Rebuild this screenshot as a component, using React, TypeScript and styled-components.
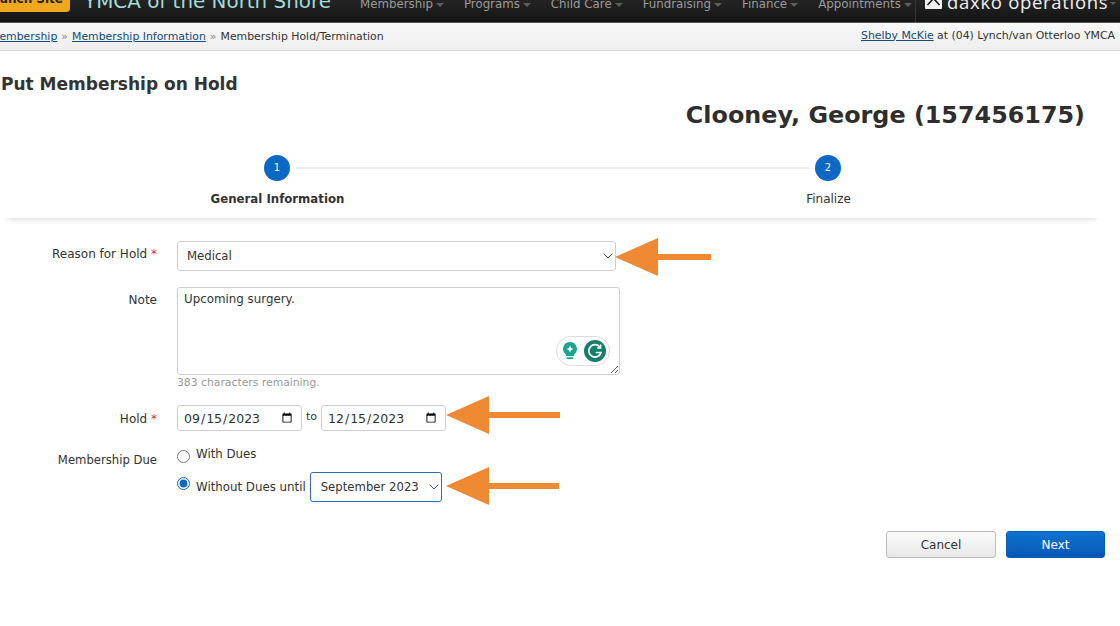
import React from 'react'
import styled, { createGlobalStyle } from 'styled-components'
import { ChevronDown } from 'lucide-react'

const GlobalStyle = createGlobalStyle`
  html, body {
    margin: 0;
    padding: 0;
    background: #fff;
  }
  body {
    width: 1120px;
    height: 626px;
    overflow: hidden;
    font-family: 'DejaVu Sans', Verdana, sans-serif;
    font-size: 12px;
    color: #333;
  }
`

const Page = styled.div`
  position: relative;
  width: 1120px;
  height: 626px;
  overflow: hidden;
`

const TopBar = styled.header`
  display: flex;
  align-items: flex-end;
  height: 22px;
  overflow: hidden;
  background: linear-gradient(#242424, #141414);
  border-bottom: 1px solid #555;
`

const LaunchBadge = styled.div`
  flex: none;
  width: 70px;
  height: 24px;
  margin-bottom: 10px;
  padding-right: 7px;
  box-sizing: border-box;
  border-radius: 0 0 4px 0;
  background: #f0a91f;
  color: #222;
  font-size: 12px;
  font-weight: bold;
  line-height: 22px;
  text-align: right;
  white-space: nowrap;
  overflow: hidden;
  direction: rtl;
`

const SiteName = styled.div`
  flex: none;
  width: 276px;
  margin-left: 14px;
  margin-bottom: 8px;
  color: #a2dcd8;
  font-size: 19.9px;
  line-height: 24px;
  white-space: nowrap;
`

const Nav = styled.nav`
  display: flex;
  flex: none;
  width: 555px;
  height: 22px;
  align-items: flex-end;
  gap: 20px;
  border-right: 1px solid #333;
`

const NavItem = styled.span`
  display: inline-flex;
  align-items: center;
  gap: 3px;
  margin-bottom: 10px;
  color: #9b9b9b;
  font-size: 11.8px;
  line-height: 16px;
  white-space: nowrap;

  &::after {
    content: '';
    margin-top: 2px;
    border-top: 4px solid #5e5e5e;
    border-left: 4px solid transparent;
    border-right: 4px solid transparent;
  }
`

const Logo = styled.div`
  display: flex;
  flex: none;
  align-items: flex-end;
  gap: 5px;
  margin-left: 9px;
  margin-bottom: 8px;
  color: #f0f0f0;
  font-family: 'Open Sans', sans-serif;
  font-size: 18.5px;
  line-height: 24px;
  letter-spacing: 0.7px;
  white-space: nowrap;

  svg {
    margin-bottom: 5px;
  }
`

const LogoCaret = styled.span`
  flex: none;
  margin-bottom: 9px;
  margin-left: -3px;
  border-top: 3px solid #5e5e5e;
  border-left: 3px solid transparent;
  border-right: 3px solid transparent;
`

const CrumbBar = styled.div`
  display: flex;
  align-items: center;
  justify-content: space-between;
  height: 27px;
  padding-right: 5px;
  overflow: hidden;
  background: linear-gradient(#f8f8f8, #eeeeee);
  border-bottom: 1px solid #d9d9d9;
  font-size: 10.9px;
`

const Crumbs = styled.div`
  margin-left: -10px;
  white-space: nowrap;
  line-height: 26px;
`

const CrumbLink = styled.a`
  color: #164a78;
  text-decoration: underline;
`

const CrumbSep = styled.span`
  margin: 0 4px;
  color: #888;
`

const UserInfo = styled.div`
  margin-bottom: 2px;
  white-space: nowrap;
  line-height: 24px;
`

const Title = styled.h1`
  margin: 21px 0 0 1px;
  color: #333;
  font-size: 17px;
  font-weight: bold;
  line-height: 24px;
`

const MemberName = styled.h2`
  margin: 3px 35px 0 0;
  color: #2e2e2e;
  font-size: 23.85px;
  font-weight: bold;
  line-height: 32px;
  text-align: right;
`

const Stepper = styled.section`
  width: 1103px;
  margin-top: 24px;
  padding-bottom: 9px;
  box-shadow: 0 7px 7px -7px rgba(0, 0, 0, 0.2);
`

const StepTrack = styled.div`
  display: flex;
  align-items: center;
  padding: 0 262px 0 264px;
`

const StepCircle = styled.div`
  flex: none;
  width: 26px;
  height: 26px;
  border-radius: 50%;
  background: #0b68c4;
  color: #fff;
  font-size: 10px;
  line-height: 26px;
  text-align: center;
`

const StepLine = styled.div`
  flex: 1;
  height: 2px;
  margin: 0 6px;
  background: #ececec;
`

const StepLabels = styled.div`
  display: grid;
  grid-template-columns: 551px 551px;
  margin-top: 8px;
  padding-left: 2px;
`

const StepLabel = styled.div<{ $active?: boolean }>`
  font-size: ${(p) => (p.$active ? '11.75px' : '12px')};
  font-weight: ${(p) => (p.$active ? 'bold' : 'normal')};
  line-height: 20px;
  text-align: center;
`

const Form = styled.form`
  display: grid;
  grid-template-columns: 157px 1fr;
  column-gap: 20px;
  margin-top: 23px;
`

const FieldLabel = styled.label<{ $top: number; $size?: number }>`
  padding-top: ${(p) => p.$top}px;
  font-size: ${(p) => p.$size ?? 12}px;
  line-height: 16px;
  text-align: right;
`

const Required = styled.span`
  color: #d9342b;
`

const Field = styled.div<{ $gap: number }>`
  margin-bottom: ${(p) => p.$gap}px;
`

const SelectWrap = styled.div<{ $width: number }>`
  position: relative;
  flex: none;
  width: ${(p) => p.$width}px;

  svg {
    position: absolute;
    top: 50%;
    right: 0;
    margin-top: -8px;
    color: #555;
    pointer-events: none;
  }
`

const Select = styled.select<{ $focus?: boolean; $height: number; $pad: number }>`
  display: block;
  width: 100%;
  height: ${(p) => p.$height}px;
  padding: 0 16px 0 ${(p) => p.$pad}px;
  box-sizing: border-box;
  appearance: none;
  border: 1px solid ${(p) => (p.$focus ? '#2a6db5' : '#cfcfcf')};
  border-radius: 3px;
  background: #fff;
  color: #333;
  font: inherit;
  font-size: 11.7px;
`

const NoteWrap = styled.div`
  position: relative;
  width: 443px;
`

const Note = styled.textarea`
  display: block;
  width: 443px;
  height: 88px;
  padding: 4px 6px;
  box-sizing: border-box;
  border: 1px solid #cfcfcf;
  border-radius: 3px;
  color: #333;
  font: inherit;
  font-size: 11.85px;
  line-height: 15px;
`

const GrammarlyPill = styled.div`
  position: absolute;
  top: 49px;
  right: 10px;
  display: flex;
  align-items: center;
  gap: 6px;
  width: 54px;
  height: 30px;
  padding-left: 5px;
  box-sizing: border-box;
  border: 1px solid #dcdcdc;
  border-radius: 15px;
  background: #fff;
`

const Hint = styled.div`
  margin-top: 1px;
  color: #999;
  font-size: 10.8px;
  line-height: 14px;
`

const DateRow = styled.div`
  display: flex;
  align-items: center;
  gap: 4px;
  color: #333;
`

const DateInput = styled.input`
  width: 125px;
  height: 26px;
  padding: 0 6px 0 5px;
  box-sizing: border-box;
  border: 1px solid #cfcfcf;
  border-radius: 3px;
  background: #fff;
  color: #333;
  font: inherit;
  font-size: 12.5px;
`

const ToText = styled.span`
  margin-top: -3px;
  font-size: 11px;
`

const RadioRow = styled.div<{ $gap: number }>`
  display: flex;
  align-items: center;
  height: 16px;
  margin-bottom: ${(p) => p.$gap}px;
`

const DueRow = styled.div`
  display: flex;
  align-items: center;
  height: 30px;
`

const Radio = styled.input<{ $lift: number }>`
  flex: none;
  width: 13px;
  height: 13px;
  margin: 0 6px ${(p) => p.$lift}px 0;
  accent-color: #0b68c4;
`

const RadioText = styled.span<{ $lift: number }>`
  margin-right: 4px;
  margin-bottom: ${(p) => p.$lift}px;
  font-size: 11.8px;
  white-space: nowrap;
`

const Buttons = styled.div`
  display: flex;
  justify-content: flex-end;
  gap: 10px;
  width: 1105px;
  margin-top: 29px;
`

const CancelButton = styled.button`
  width: 110px;
  height: 27px;
  border: 1px solid #bdbdbd;
  border-radius: 3px;
  background: linear-gradient(#fbfbfb, #e8e8e8);
  color: #333;
  font: inherit;
`

const NextButton = styled.button`
  width: 99px;
  height: 27px;
  border: 1px solid #0a5db3;
  border-radius: 3px;
  background: linear-gradient(#0d74d1, #0a56b4);
  color: #fff;
  font: inherit;
`

const Arrow = styled.svg<{ $x: number; $y: number }>`
  position: absolute;
  left: ${(p) => p.$x}px;
  top: ${(p) => p.$y}px;
`

const NAV_ITEMS = ['Membership', 'Programs', 'Child Care', 'Fundraising', 'Finance', 'Appointments']

const OrangeArrow = ({ x, y, length }: { x: number; y: number; length: number }) => (
  <Arrow $x={x} $y={y} width={length} height={38} viewBox={`0 0 ${length} 38`}>
    <path d={`M0 19 L43 0 V16 H${length} V22 H43 V38 Z`} fill="#ee8a34" />
  </Arrow>
)

const LogoMark = () => (
  <svg width="17" height="12" viewBox="0 0 17 12">
    <path d="M1 0 H16 Q17 0 17 1 V11 Q17 12 16 12 H1 Q0 12 0 11 V1 Q0 0 1 0 Z" fill="#f0f0f0" />
    <path d="M2.5 8 L8.5 1.5 L14.5 8" fill="none" stroke="#1a1a1a" strokeWidth="1.6" />
  </svg>
)

const BulbIcon = () => (
  <svg width="16" height="18" viewBox="0 0 16 18">
    <path d="M8 0a7 7 0 0 1 4 12.7V14H4v-1.3A7 7 0 0 1 8 0Z" fill="#1aa58f" />
    <path d="M8 3.5 9.2 6 11.5 7 9.2 8 8 10.5 6.8 8 4.5 7 6.8 6Z" fill="#fff" />
    <rect x="4.5" y="15.2" width="7" height="1.8" rx="0.9" fill="#1aa58f" />
  </svg>
)

const GrammarlyIcon = () => (
  <svg width="22" height="22" viewBox="0 0 22 22">
    <circle cx="11" cy="11" r="11" fill="#14806a" />
    <path
      d="M16 7.2A6.2 6.2 0 1 0 17 12.5H12.5"
      fill="none"
      stroke="#fff"
      strokeWidth="1.7"
      strokeLinecap="round"
    />
    <path d="M16.6 4.6V8H13.2" fill="none" stroke="#fff" strokeWidth="1.5" />
  </svg>
)

export default function App() {
  return (
    <Page>
      <GlobalStyle />
      <TopBar>
        <LaunchBadge>Launch Site</LaunchBadge>
        <SiteName>YMCA of the North Shore</SiteName>
        <Nav>
          {NAV_ITEMS.map((item) => (
            <NavItem key={item}>{item}</NavItem>
          ))}
        </Nav>
        <Logo>
          <LogoMark />
          daxko operations
          <LogoCaret />
        </Logo>
      </TopBar>
      <CrumbBar>
        <Crumbs>
          <CrumbLink href="#">Membership</CrumbLink>
          <CrumbSep>»</CrumbSep>
          <CrumbLink href="#">Membership Information</CrumbLink>
          <CrumbSep>»</CrumbSep>
          Membership Hold/Termination
        </Crumbs>
        <UserInfo>
          <CrumbLink href="#">Shelby McKie</CrumbLink> at (04) Lynch/van Otterloo YMCA
        </UserInfo>
      </CrumbBar>
      <Title>Put Membership on Hold</Title>
      <MemberName>Clooney, George (157456175)</MemberName>
      <Stepper>
        <StepTrack>
          <StepCircle>1</StepCircle>
          <StepLine />
          <StepCircle>2</StepCircle>
        </StepTrack>
        <StepLabels>
          <StepLabel $active>General Information</StepLabel>
          <StepLabel>Finalize</StepLabel>
        </StepLabels>
      </Stepper>
      <Form>
        <FieldLabel $top={5}>
          Reason for Hold <Required>*</Required>
        </FieldLabel>
        <Field $gap={16}>
          <SelectWrap $width={439}>
            <Select $height={30} $pad={9} defaultValue="Medical">
              <option>Medical</option>
            </Select>
            <ChevronDown size={16} strokeWidth={1.5} />
          </SelectWrap>
        </Field>
        <FieldLabel $top={5}>Note</FieldLabel>
        <Field $gap={15}>
          <NoteWrap>
            <Note defaultValue="Upcoming surgery." />
            <GrammarlyPill>
              <BulbIcon />
              <GrammarlyIcon />
            </GrammarlyPill>
          </NoteWrap>
          <Hint>383 characters remaining.</Hint>
        </Field>
        <FieldLabel $top={6}>
          Hold <Required>*</Required>
        </FieldLabel>
        <Field $gap={17}>
          <DateRow>
            <DateInput type="date" defaultValue="2023-09-15" />
            <ToText>to</ToText>
            <DateInput type="date" defaultValue="2023-12-15" />
          </DateRow>
        </Field>
        <FieldLabel $top={4} $size={11.65}>
          Membership Due
        </FieldLabel>
        <Field $gap={0}>
          <RadioRow $gap={8}>
            <Radio type="radio" name="due" $lift={0} />
            <RadioText $lift={4}>With Dues</RadioText>
          </RadioRow>
          <DueRow>
            <Radio type="radio" name="due" defaultChecked $lift={8} />
            <RadioText $lift={0}>Without Dues until</RadioText>
            <SelectWrap $width={132}>
              <Select $focus $height={30} $pad={10} defaultValue="September 2023">
                <option>September 2023</option>
              </Select>
              <ChevronDown size={16} strokeWidth={1.5} />
            </SelectWrap>
          </DueRow>
        </Field>
      </Form>
      <Buttons>
        <CancelButton type="button">Cancel</CancelButton>
        <NextButton type="button">Next</NextButton>
      </Buttons>
      <OrangeArrow x={615} y={238} length={96} />
      <OrangeArrow x={446} y={396} length={114} />
      <OrangeArrow x={446} y={467} length={113} />
    </Page>
  )
}
